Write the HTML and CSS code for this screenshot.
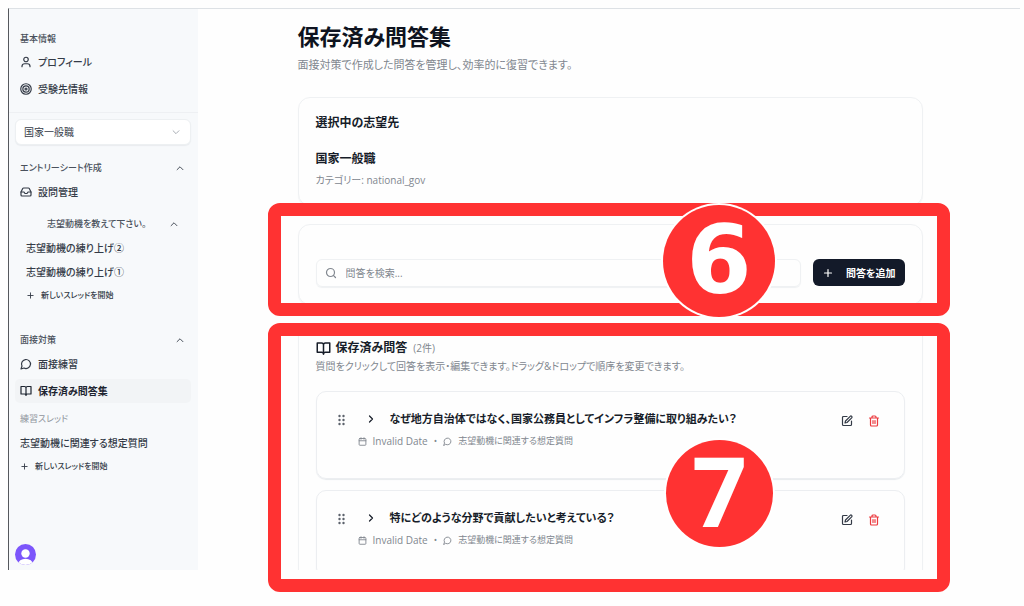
FILE: index.html
```html
<!DOCTYPE html>
<html lang="ja">
  <head>
    <meta charset="UTF-8" />
    <meta name="viewport" content="width=device-width, initial-scale=1.0" />
    <title>保存済み問答集</title>
    <link rel="stylesheet" href="styles.css">
  </head>
  <body>
    <!-- icons -->
    <svg class="sprite" aria-hidden="true">
      <symbol id="user" viewBox="0 0 24 24"><circle cx="12" cy="7" r="4.5" /><path d="M4 21.5v-1a5 5 0 0 1 5-5h6a5 5 0 0 1 5 5v1" /></symbol>
      <symbol id="target" viewBox="0 0 24 24"><circle cx="12" cy="12" r="10.5" /><circle cx="12" cy="12" r="6.3" /><circle cx="12" cy="12" r="2" /></symbol>
      <symbol id="inbox" viewBox="0 0 24 24"><path d="M22 12h-6l-2 3h-4l-2-3H2" /><path d="M5.45 5.11 2 12v6a2 2 0 0 0 2 2h16a2 2 0 0 0 2-2v-6l-3.45-6.89A2 2 0 0 0 16.76 4H7.24a2 2 0 0 0-1.79 1.11z" /></symbol>
      <symbol id="chat" viewBox="0 0 24 24"><path d="M7.9 20A9 9 0 1 0 4 16.1L2 22Z" /></symbol>
      <symbol id="book" viewBox="0 0 24 24"><path d="M12 6v15M2 3h7a3 3 0 0 1 3 3 3 3 0 0 1 3-3h7v15h-7a3 3 0 0 0-3 3 3 3 0 0 0-3-3H2z" /></symbol>
      <symbol id="up" viewBox="0 0 24 24"><path d="m5 16 7-7 7 7" /></symbol>
      <symbol id="down" viewBox="0 0 24 24"><path d="m5 9 7 7 7-7" /></symbol>
      <symbol id="right" viewBox="0 0 24 24"><path d="m9 18 6-6-6-6" /></symbol>
      <symbol id="plus" viewBox="0 0 24 24"><path d="M5 12h14M12 5v14" /></symbol>
      <symbol id="search" viewBox="0 0 24 24"><circle cx="11" cy="11" r="8" /><path d="m21 21-4.3-4.3" /></symbol>
      <symbol id="calendar" viewBox="0 0 24 24"><rect x="3" y="4" width="18" height="18" rx="2" /><path d="M8 2v4M16 2v4M3 10h18" /></symbol>
      <symbol id="edit" viewBox="0 0 24 24"><path d="M12 3H5a2 2 0 0 0-2 2v14a2 2 0 0 0 2 2h14a2 2 0 0 0 2-2v-7" /><path d="M18.4 2.6a2.1 2.1 0 0 1 3 3L12 15l-4 1 1-4z" /></symbol>
      <symbol id="trash" viewBox="0 0 24 24"><path d="M3 6h18M19 6v14a2 2 0 0 1-2 2H7a2 2 0 0 1-2-2V6M8 6V4a2 2 0 0 1 2-2h4a2 2 0 0 1 2 2v2M10 11v6M14 11v6" /></symbol>
      <symbol id="grip" viewBox="0 0 12 18"><g fill="currentColor" stroke="none"><circle cx="3" cy="3" r="1.8" /><circle cx="9" cy="3" r="1.8" /><circle cx="3" cy="9" r="1.8" /><circle cx="9" cy="9" r="1.8" /><circle cx="3" cy="15" r="1.8" /><circle cx="9" cy="15" r="1.8" /></g></symbol>
    </svg>

    <div class="app">
      <aside class="sidebar">
        <nav class="group">
          <h2 class="label">基本情報</h2>
          <a class="nav" href="#"><svg class="icon"><use href="#user" /></svg>プロフィール</a>
          <a class="nav" href="#"><svg class="icon"><use href="#target" /></svg>受験先情報</a>
        </nav>

        <div class="picker">
          <select id="target-select" aria-label="受験先">
            <option>国家一般職</option>
          </select>
          <svg class="icon small"><use href="#down" /></svg>
        </div>

        <nav class="group es">
          <button class="label toggle" type="button">エントリーシート作成<svg class="icon small"><use href="#up" /></svg></button>
          <a class="nav" href="#"><svg class="icon"><use href="#inbox" /></svg>設問管理</a>
          <button class="label toggle question" type="button">志望動機を教えて下さい。<svg class="icon small"><use href="#up" /></svg></button>
          <div class="threads">
            <a class="thread" href="#">志望動機の練り上げ②</a>
            <a class="thread" href="#">志望動機の練り上げ①</a>
            <button class="new" type="button"><svg class="icon tiny"><use href="#plus" /></svg>新しいスレッドを開始</button>
          </div>
        </nav>

        <nav class="group interview">
          <button class="label toggle" type="button">面接対策<svg class="icon small"><use href="#up" /></svg></button>
          <a class="nav" href="#"><svg class="icon"><use href="#chat" /></svg>面接練習</a>
          <a class="nav active" href="#"><svg class="icon"><use href="#book" /></svg>保存済み問答集</a>
          <h3 class="label sub">練習スレッド</h3>
          <a class="thread" href="#">志望動機に関連する想定質問</a>
          <button class="new" type="button"><svg class="icon tiny"><use href="#plus" /></svg>新しいスレッドを開始</button>
        </nav>

        <button class="avatar" type="button" aria-label="アカウント">
          <svg viewBox="0 0 20 20"><rect width="20" height="20" fill="#7c56fb" /><circle cx="10" cy="9" r="4" fill="#fff" /><ellipse cx="10" cy="19" rx="7" ry="5" fill="#fff" /></svg>
        </button>
      </aside>

      <main class="main">
        <div class="content">
          <header class="head">
            <h1>保存済み問答集</h1>
            <p>面接対策で作成した問答を管理し、効率的に復習できます。</p>
          </header>

          <section class="card">
            <h2 class="title">選択中の志望先</h2>
            <p class="title choice">国家一般職</p>
            <p class="note">カテゴリー: national_gov</p>
          </section>

          <section class="card tools">
            <label class="search">
              <svg class="icon"><use href="#search" /></svg>
              <input type="search" placeholder="問答を検索..." aria-label="問答を検索" />
            </label>
            <button class="add" type="button"><svg class="icon"><use href="#plus" /></svg>問答を追加</button>
          </section>

          <section class="card saved">
            <h2 class="title"><svg class="icon large"><use href="#book" /></svg>保存済み問答<span class="count">(2件)</span></h2>
            <p class="note">質問をクリックして回答を表示・編集できます。ドラッグ&amp;ドロップで順序を変更できます。</p>
            <ul class="list">
              <li class="item">
                <svg class="grip"><use href="#grip" /></svg>
                <div class="body">
                  <button class="title open" type="button"><svg class="icon"><use href="#right" /></svg>なぜ地方自治体ではなく、国家公務員としてインフラ整備に取り組みたい？</button>
                  <p class="meta"><svg class="icon tiny"><use href="#calendar" /></svg><span class="date">Invalid Date</span><span>•</span><svg class="icon tiny"><use href="#chat" /></svg><span>志望動機に関連する想定質問</span></p>
                </div>
                <button class="act" type="button" aria-label="編集"><svg class="icon"><use href="#edit" /></svg></button>
                <button class="act delete" type="button" aria-label="削除"><svg class="icon"><use href="#trash" /></svg></button>
              </li>
              <li class="item">
                <svg class="grip"><use href="#grip" /></svg>
                <div class="body">
                  <button class="title open" type="button"><svg class="icon"><use href="#right" /></svg>特にどのような分野で貢献したいと考えている？</button>
                  <p class="meta"><svg class="icon tiny"><use href="#calendar" /></svg><span class="date">Invalid Date</span><span>•</span><svg class="icon tiny"><use href="#chat" /></svg><span>志望動機に関連する想定質問</span></p>
                </div>
                <button class="act" type="button" aria-label="編集"><svg class="icon"><use href="#edit" /></svg></button>
                <button class="act delete" type="button" aria-label="削除"><svg class="icon"><use href="#trash" /></svg></button>
              </li>
            </ul>
          </section>
        </div>
      </main>
    </div>

    <!-- numbered callouts over the page -->
    <div class="callout six"><span class="number">6</span></div>
    <div class="callout seven"><span class="number">7</span></div>
  </body>
</html>
```

FILE: styles.css
```css
* {
  box-sizing: border-box;
}
body {
  position: relative;
  height: 100vh;
  margin: 0;
  padding: 8px 4px 36px 8px;
  overflow: hidden;
  background: #fefefe;
  color: #343b47;
  font-family: "Open Sans", "Noto Sans CJK JP", sans-serif;
  font-size: 10px;
  line-height: 16px;
  font-feature-settings: "palt";
}
h1,
h2,
h3,
p,
ul {
  margin: 0;
  padding: 0;
}
button,
input,
select {
  margin: 0;
  padding: 0;
  border: 0;
  background: none;
  color: inherit;
  font: inherit;
  font-feature-settings: inherit;
}
a {
  color: inherit;
  text-decoration: none;
}
.sprite {
  position: absolute;
  width: 0;
  height: 0;
}
.icon {
  flex: none;
  width: 12px;
  height: 12px;
  fill: none;
  stroke: currentColor;
  stroke-width: 2.4;
  stroke-linecap: round;
  stroke-linejoin: round;
}
.small {
  width: 10px;
  height: 10px;
}
.tiny {
  width: 9px;
  height: 9px;
}
.large {
  width: 15px;
  height: 15px;
}
.app {
  display: flex;
  height: 100%;
  border-top: 1px solid #dde1e5;
  border-left: 1px solid #55585d;
}

/* sidebar */
.sidebar {
  display: flex;
  flex-direction: column;
  flex: none;
  width: 189px;
  padding: 21px 7px 5px 6px;
  background: #f7f9fb;
}
.group {
  display: flex;
  flex-direction: column;
}
.label {
  display: flex;
  align-items: center;
  justify-content: space-between;
  padding: 0 6px 0 5px;
  color: #4a515c;
  font-size: 9px;
  font-weight: 500;
  line-height: 18px;
}
.nav {
  display: flex;
  align-items: center;
  gap: 6px;
  height: 24px;
  margin-top: 3px;
  padding: 0 5px;
  border-radius: 5px;
  font-weight: 500;
}
h2.label + .nav {
  margin-top: 2px;
}
.active {
  background: #f2f4f6;
  color: #1d2430;
  font-weight: 700;
}
.picker {
  position: relative;
  margin: 11px -7px 0 -6px;
  padding: 6px 7px 0 6px;
  border-top: 1px solid #eef0f3;
}
.picker select {
  width: 100%;
  height: 26px;
  padding: 0 8px;
  border: 1px solid #edf0f2;
  border-radius: 6px;
  background: #fff;
  box-shadow: 0 1px 1px #e9ecef;
  appearance: none;
}
.picker .icon {
  position: absolute;
  top: 14px;
  right: 17px;
  color: #a9aeb5;
}
.es {
  margin-top: 14px;
}
.toggle.question {
  margin-top: 11px;
  padding: 0 12px 0 32px;
}
.threads {
  display: flex;
  flex-direction: column;
  padding-left: 6px;
}
.thread {
  margin-top: 4px;
  padding: 0 5px;
  font-weight: 500;
  line-height: 20px;
}
.question + .threads .thread:first-child {
  margin-top: 5px;
}
.new {
  display: flex;
  align-items: center;
  gap: 6px;
  height: 18px;
  margin-top: 4px;
  padding: 0 5px;
  font-size: 8px;
  font-weight: 500;
}
.interview {
  margin-top: 27px;
}
.label.sub {
  margin-top: 7px;
  color: #8f959d;
  font-weight: 400;
}
.sub + .thread {
  margin-top: 5px;
}
.avatar {
  width: 21px;
  height: 21px;
  margin-top: auto;
  border-radius: 50%;
  overflow: hidden;
}
.avatar svg {
  display: block;
  width: 100%;
}

/* main column */
.main {
  flex: 1;
  min-width: 0;
  padding: 11px 14px 0 16px;
  overflow: hidden;
}
.content {
  display: flex;
  flex-direction: column;
  gap: 18px;
  max-width: 625px;
  margin: 0 auto;
}
.head {
  margin-bottom: 4px;
  color: #81878f;
  font-size: 11px;
  line-height: 20px;
}
.head h1 {
  margin-bottom: 3px;
  color: #0e1320;
  font-size: 22px;
  font-weight: 700;
  line-height: 32px;
}
.card {
  padding: 17px;
  border: 1px solid #eff1f3;
  border-radius: 12px;
  box-shadow: 0 1px 1px #eff1f3;
}
.title {
  display: flex;
  align-items: center;
  color: #171d29;
  font-size: 12px;
  font-weight: 700;
  line-height: 16px;
}
.choice {
  margin-top: 20px;
}
.note {
  margin-top: 5px;
  color: #81878f;
}
.tools {
  display: flex;
  gap: 12px;
  padding-top: 34px;
}
.search {
  display: flex;
  align-items: center;
  flex: 1;
  gap: 9px;
  height: 28px;
  padding: 0 8px;
  border: 1px solid #eff1f3;
  border-radius: 6px;
  box-shadow: 0 1px 1px #eff1f3;
  color: #81878f;
}
.search input {
  flex: 1;
  min-width: 0;
  outline: 0;
}
.search input::placeholder {
  color: #81878f;
}
.add {
  display: flex;
  align-items: center;
  gap: 12px;
  height: 27px;
  padding: 0 9px;
  border-radius: 6px;
  background: #131a29;
  color: #fff;
  font-weight: 700;
}
.saved {
  padding-top: 16px;
}
.saved .title .large {
  margin-right: 5px;
}
.count {
  margin-left: 6px;
  color: #81878f;
  font-size: 10px;
  font-weight: 400;
}
.saved .note {
  margin-top: 2px;
}
.list {
  display: flex;
  flex-direction: column;
  gap: 11px;
  margin-top: 17px;
  list-style: none;
}
.item {
  display: flex;
  align-items: flex-start;
  min-height: 88px;
  padding: 18px 16px 0 20px;
  border: 1px solid #eceef1;
  border-radius: 10px;
  box-shadow: 0 1px 1px #e8ebee;
}
.grip {
  width: 9px;
  height: 12px;
  margin-top: 4px;
  color: #5c626c;
}
.body {
  flex: 1;
  min-width: 0;
  margin-left: 12px;
}
.open {
  gap: 13px;
  padding-left: 7px;
  font-size: 11px;
  line-height: 18px;
  text-align: left;
}
.meta {
  display: flex;
  align-items: center;
  gap: 6px;
  margin-top: 5px;
  color: #81878f;
  font-size: 9px;
}
.date {
  font-size: 10px;
}
.act {
  display: flex;
  align-items: center;
  justify-content: center;
  width: 27px;
  height: 22px;
  color: #343b47;
}
.delete {
  color: #ec3a3f;
}

/* callouts */
.callout {
  position: absolute;
  left: 268px;
  width: 682px;
  border: 13px solid #ff3232;
  border-radius: 12px;
}
.six {
  top: 203px;
  height: 113px;
}
.seven {
  top: 323px;
  height: 269px;
}
.number {
  position: absolute;
  display: flex;
  align-items: center;
  justify-content: center;
  border-radius: 50%;
  background: #ff3232;
  box-shadow: 0 0 0 2px #fff;
  color: #fff;
  font-family: "DejaVu Sans", sans-serif;
  font-size: 94px;
  font-weight: 700;
}
.six .number {
  top: -11px;
  left: 382px;
  width: 112px;
  height: 112px;
}
.seven .number {
  top: 104px;
  left: 385px;
  width: 107px;
  height: 107px;
  padding-bottom: 8px;
  font-family: "Open Sans", sans-serif;
  font-size: 96px;
}
```
